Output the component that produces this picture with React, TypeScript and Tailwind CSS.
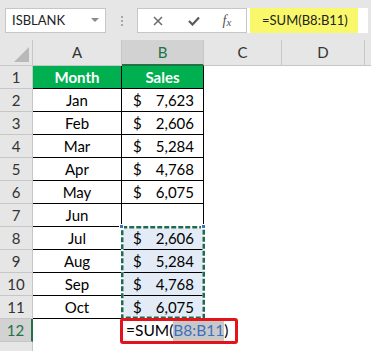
import React from "react";

const rows: { n: number; a: string; b: string }[] = [
  { n: 2, a: "Jan", b: "7,623" },
  { n: 3, a: "Feb", b: "2,606" },
  { n: 4, a: "Mar", b: "5,284" },
  { n: 5, a: "Apr", b: "4,768" },
  { n: 6, a: "May", b: "6,075" },
  { n: 7, a: "Jun", b: "" },
  { n: 8, a: "Jul", b: "2,606" },
  { n: 9, a: "Aug", b: "5,284" },
  { n: 10, a: "Sep", b: "4,768" },
  { n: 11, a: "Oct", b: "6,075" },
];

function RowHeader({ n, selected }: { n: number; selected?: boolean }) {
  return (
    <div
      className={
        selected
          ? "w-[33px] shrink-0 flex items-center justify-center bg-[#d2d2d2] text-[#217346] border-b border-[#c6c6c6] border-r-2 border-r-[#217346]"
          : "w-[33px] shrink-0 flex items-center justify-center bg-[#e6e6e6] text-[#333] border-b border-r border-[#c6c6c6]"
      }
    >
      {n}
    </div>
  );
}

export default function App() {
  return (
    <div
      className="relative w-[371px] h-[351px] overflow-hidden bg-white text-[15px] text-black"
      style={{ fontFamily: "Lato, 'Open Sans', sans-serif" }}
    >
      {/* Top bar */}
      <div className="h-[40px] bg-[#e6e6e6] flex items-start pt-[8px] pl-[5px]">
        <div className="w-[101px] h-[25px] bg-white border border-[#c6c6c6] flex items-center justify-between pl-[6px] pr-[6px] text-[13px] text-[#222]">
          <span>ISBLANK</span>
          <svg width="8" height="5" viewBox="0 0 8 5">
            <path d="M0 0 L8 0 L4 4 Z" fill="#8a8a8a" />
          </svg>
        </div>
        <div className="w-[31px] h-[25px] flex flex-col items-center justify-center gap-[2px]">
          <div className="w-[2px] h-[2px] bg-[#a8a8a8]" />
          <div className="w-[2px] h-[2px] bg-[#a8a8a8]" />
          <div className="w-[2px] h-[2px] bg-[#a8a8a8]" />
        </div>
        <div className="w-[110px] h-[25px] bg-white border border-[#c6c6c6] flex items-center">
          <div className="w-[40px] flex justify-center">
            <svg width="10" height="10" viewBox="0 0 10 10">
              <path d="M1 1 L9 9 M9 1 L1 9" stroke="#6a6a6a" strokeWidth="1.5" />
            </svg>
          </div>
          <div className="w-[32px] flex justify-center">
            <svg width="12" height="10" viewBox="0 0 12 10">
              <path d="M1 5 L4.5 8.5 L11 1.5" stroke="#5a5a5a" strokeWidth="2.2" fill="none" />
            </svg>
          </div>
          <div
            className="w-[34px] flex justify-center italic text-[#555] text-[14px] leading-none"
            style={{ fontFamily: "'Liberation Serif', serif" }}
          >
            <span>f</span>
            <span className="text-[11px] mt-[3px]">x</span>
          </div>
        </div>
        <div className="w-[121px] h-[25px] bg-white pl-[3px] flex">
          <div className="w-[108px] h-[25px] bg-[#f9f86a] flex items-center pl-[12px] text-[13px] text-[#222]">
            =SUM(B8:B11)
          </div>
        </div>
      </div>

      {/* Column headers */}
      <div className="flex h-[26px] bg-[#e6e6e6] text-[#333]">
        <div className="w-[33px] shrink-0 border-r border-b border-[#c6c6c6] flex items-end justify-end pr-[3px] pb-[3px]">
          <svg width="15" height="15" viewBox="0 0 15 15">
            <path d="M15 0 L15 15 L0 15 Z" fill="#b9b9b9" />
          </svg>
        </div>
        <div className="w-[89px] shrink-0 border-r border-b border-[#c6c6c6] flex items-center justify-center">A</div>
        <div className="w-[82px] shrink-0 bg-[#d2d2d2] text-[#217346] border-r border-[#c6c6c6] border-b-2 border-b-[#217346] flex items-center justify-center">
          B
        </div>
        <div className="w-[78px] shrink-0 border-r border-b border-[#c6c6c6] flex items-center justify-center">C</div>
        <div className="w-[83px] shrink-0 border-r border-b border-[#c6c6c6] flex items-center justify-center">D</div>
        <div className="flex-1 border-b border-[#c6c6c6]" />
      </div>

      {/* Row 1 */}
      <div className="flex h-[23px]">
        <RowHeader n={1} />
        <div className="w-[89px] shrink-0 bg-[#00b050] text-white font-bold border-r border-b border-black flex items-center justify-center">
          Month
        </div>
        <div className="w-[82px] shrink-0 bg-[#00b050] text-white font-bold border-r border-b border-black flex items-center justify-center">
          Sales
        </div>
      </div>

      {rows.map((r) => {
        const sel = r.n >= 8;
        return (
          <div key={r.n} className="flex h-[23px]">
            <RowHeader n={r.n} />
            <div className="w-[89px] shrink-0 border-r border-b border-black flex items-center justify-center">
              {r.a}
            </div>
            <div
              className={
                "w-[82px] shrink-0 border-r border-b border-black flex items-center justify-between pl-[11px] pr-[9px] " +
                (sel ? "bg-[#e3ebf6]" : "bg-white")
              }
            >
              {r.b ? (
                <>
                  <span>$</span>
                  <span>{r.b}</span>
                </>
              ) : null}
            </div>
          </div>
        );
      })}

      {/* Row 12 */}
      <div className="flex h-[23px]">
        <RowHeader n={12} selected />
        <div className="w-[89px] shrink-0" />
        <div className="w-[82px] shrink-0" />
      </div>
      {/* Row 13 */}
      <div className="flex h-[23px]">
        <div className="w-[33px] shrink-0 bg-[#e6e6e6] border-r border-[#c6c6c6]" />
      </div>

      {/* Marching ants around B8:B11 */}
      <svg className="absolute left-[121px] top-[226px]" width="84" height="93" viewBox="0 0 84 93">
        <rect x="1.25" y="1.25" width="81.5" height="90.5" fill="none" stroke="#ffffff" strokeWidth="2.5" />
        <rect x="1.25" y="1.25" width="81.5" height="90.5" fill="none" stroke="#1f6b52" strokeWidth="2.5" strokeDasharray="5 2" />
      </svg>
      <div className="absolute left-[119px] top-[224px] w-[5px] h-[5px] bg-[#3f6fc8] border border-white" />
      <div className="absolute left-[201px] top-[224px] w-[5px] h-[5px] bg-[#3f6fc8] border border-white" />

      {/* Editing cell B12 */}
      <div className="absolute left-[120px] top-[318px] w-[118px] h-[26px] border-[3px] border-[#e3131c] rounded-[3px] bg-white flex items-stretch pl-[3px] text-[15.5px] text-black">
        <span className="flex items-center">=SUM(</span>
        <span className="flex items-center bg-[#c8c8c8] text-[#3e6fc0]">B8:B11</span>
        <span className="flex items-center">)</span>
      </div>
    </div>
  );
}
